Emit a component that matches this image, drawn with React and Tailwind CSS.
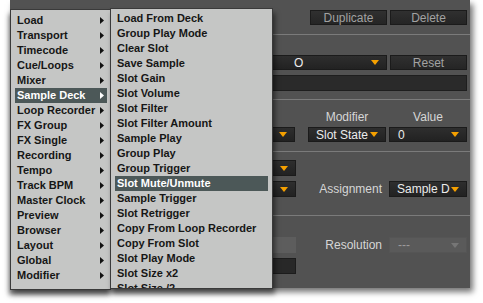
const mainItems = [
  "Load",
  "Transport",
  "Timecode",
  "Cue/Loops",
  "Mixer",
  "Sample Deck",
  "Loop Recorder",
  "FX Group",
  "FX Single",
  "Recording",
  "Tempo",
  "Track BPM",
  "Master Clock",
  "Preview",
  "Browser",
  "Layout",
  "Global",
  "Modifier",
];

const subItems = [
  "Load From Deck",
  "Group Play Mode",
  "Clear Slot",
  "Save Sample",
  "Slot Gain",
  "Slot Volume",
  "Slot Filter",
  "Slot Filter Amount",
  "Sample Play",
  "Group Play",
  "Group Trigger",
  "Slot Mute/Unmute",
  "Sample Trigger",
  "Slot Retrigger",
  "Copy From Loop Recorder",
  "Copy From Slot",
  "Slot Play Mode",
  "Slot Size x2",
  "Slot Size /2",
];

function DownArrow({ color = "#f5a000" }) {
  return (
    <svg width="8" height="5" viewBox="0 0 8 5" className="shrink-0">
      <path d="M0 0 H8 L4 5 Z" fill={color} />
    </svg>
  );
}

function RightArrow({ color = "#111" }) {
  return (
    <svg width="4" height="7" viewBox="0 0 4 7" className="shrink-0">
      <path d="M0 0 L4 3.5 L0 7 Z" fill={color} />
    </svg>
  );
}

function Dropdown({ label, className = "", labelClass = "", disabled = false }) {
  return (
    <div
      className={`flex items-center justify-between whitespace-nowrap pr-[7px] border ${
        disabled
          ? "bg-[#5a5a5a] border-[#555] text-[#9c9c9c]"
          : "bg-gradient-to-b from-[#2e2e2e] to-[#222] border-[#1b1b1b] text-[#ececec]"
      } ${className}`}
    >
      <span className={`leading-none ${labelClass}`}>{label}</span>
      <DownArrow color={disabled ? "#767676" : "#f5a000"} />
    </div>
  );
}

function Button({ label, className = "" }) {
  return (
    <div
      className={`flex items-center justify-center whitespace-nowrap bg-gradient-to-b from-[#303030] to-[#252525] border border-[#1b1b1b] text-[#a2a2a2] leading-none ${className}`}
    >
      {label}
    </div>
  );
}

export default function App() {
  return (
    <div className="relative w-[483px] h-[303px] bg-white overflow-hidden font-['Liberation_Sans',Arial,sans-serif]">
      <div className="ml-[10px] w-[460px] h-[288px] bg-[#525252] shadow-[3px_4px_6px_rgba(0,0,0,0.55)] flex flex-col text-[12px]">
        <div className="mt-[10px] h-[15px] flex justify-end gap-[3px] pr-[3px]">
          <Button label="Duplicate" className="w-[77px]" />
          <Button label="Delete" className="w-[77px]" />
        </div>
        <div className="mt-[9px] h-px bg-[#7b7b7b]" />
        <div className="mt-[20px] h-[15px] flex justify-end gap-[3px] pr-[3px]">
          <Dropdown label="O" labelClass="ml-[97px]" className="w-[191px]" />
          <Button label="Reset" className="w-[77px]" />
        </div>
        <div className="mt-[5px] h-[16px] flex justify-end pr-[3px]">
          <div className="w-[271px] bg-[#2a2a2a] border border-[#1e1e1e]" />
        </div>
        <div className="mt-[8px] h-px bg-[#7b7b7b]" />
        <div className="mt-[11px] h-[13px] flex justify-end gap-[3px] pr-[3px] text-[#d6d6d6] leading-none">
          <div className="w-[78px] text-center">Modifier</div>
          <div className="w-[78px] text-center">Value</div>
        </div>
        <div className="mt-[3px] h-[15px] flex justify-end pr-[3px]">
          <Dropdown label="" className="w-[100px]" />
          <div className="w-[13px]" />
          <Dropdown label="Slot State" labelClass="ml-[7px]" className="w-[78px]" />
          <div className="w-[3px]" />
          <Dropdown label="0" labelClass="ml-[8px]" className="w-[78px]" />
        </div>
        <div className="mt-[9px] h-px bg-[#7b7b7b]" />
        <div className="mt-[8px] h-[16px] flex justify-end pr-[3px]">
          <Dropdown label="" className="w-[100px]" />
          <div className="w-[171px]" />
        </div>
        <div className="mt-[5px] h-[16px] flex justify-end items-center pr-[3px]">
          <Dropdown label="" className="w-[100px] h-full" />
          <div className="w-[93px] text-right pr-[7px] text-[#d6d6d6] leading-none whitespace-nowrap">Assignment</div>
          <Dropdown label="Sample D" labelClass="ml-[7px]" className="w-[78px] h-full" />
        </div>
        <div className="mt-[18px] h-px bg-[#7b7b7b]" />
        <div className="mt-[21px] h-[16px] flex justify-end items-center pr-[3px]">
          <div className="w-[100px] h-full bg-[#5d5d5d]" />
          <div className="w-[93px] text-right pr-[7px] text-[#d6d6d6] leading-none whitespace-nowrap">Resolution</div>
          <Dropdown label="---" labelClass="ml-[8px]" disabled className="w-[78px] h-full" />
        </div>
        <div className="mt-[5px] h-[16px] flex justify-end pr-[3px]">
          <div className="w-[100px] h-full bg-[#282828] border border-[#1c1c1c]" />
          <div className="w-[171px]" />
        </div>
      </div>

      <div className="absolute left-[10px] top-[9px] w-[101px] h-[281px] bg-[#c5c6c5] border border-[#3a3a3a] shadow-[-1px_5px_5px_rgba(0,0,0,0.55)] pt-[3px] pl-[4px] pr-[3px] text-[11px] font-bold text-[#161616]">
        {mainItems.map((item) => {
          const active = item === "Sample Deck";
          return (
            <div
              key={item}
              className={`h-[15px] flex items-center justify-between whitespace-nowrap pl-[2px] pr-[3px] leading-none ${
                active ? "bg-[#4c5858] text-white" : ""
              }`}
            >
              <span>{item}</span>
              <RightArrow color={active ? "#ffffff" : "#111"} />
            </div>
          );
        })}
      </div>

      <div className="absolute left-[110px] top-[8px] w-[163px] h-[281px] bg-[#c5c6c5] border border-[#3a3a3a] shadow-[2px_5px_5px_rgba(0,0,0,0.5)] overflow-hidden pt-[2px] pl-[4px] pr-[4px] text-[11px] font-bold text-[#161616]">
        {subItems.map((item) => {
          const active = item === "Slot Mute/Unmute";
          return (
            <div
              key={item}
              className={`h-[15px] shrink-0 flex items-center whitespace-nowrap pl-[2px] leading-none ${
                active ? "bg-[#4c5858] text-white" : ""
              }`}
            >
              {item}
            </div>
          );
        })}
      </div>
    </div>
  );
}
